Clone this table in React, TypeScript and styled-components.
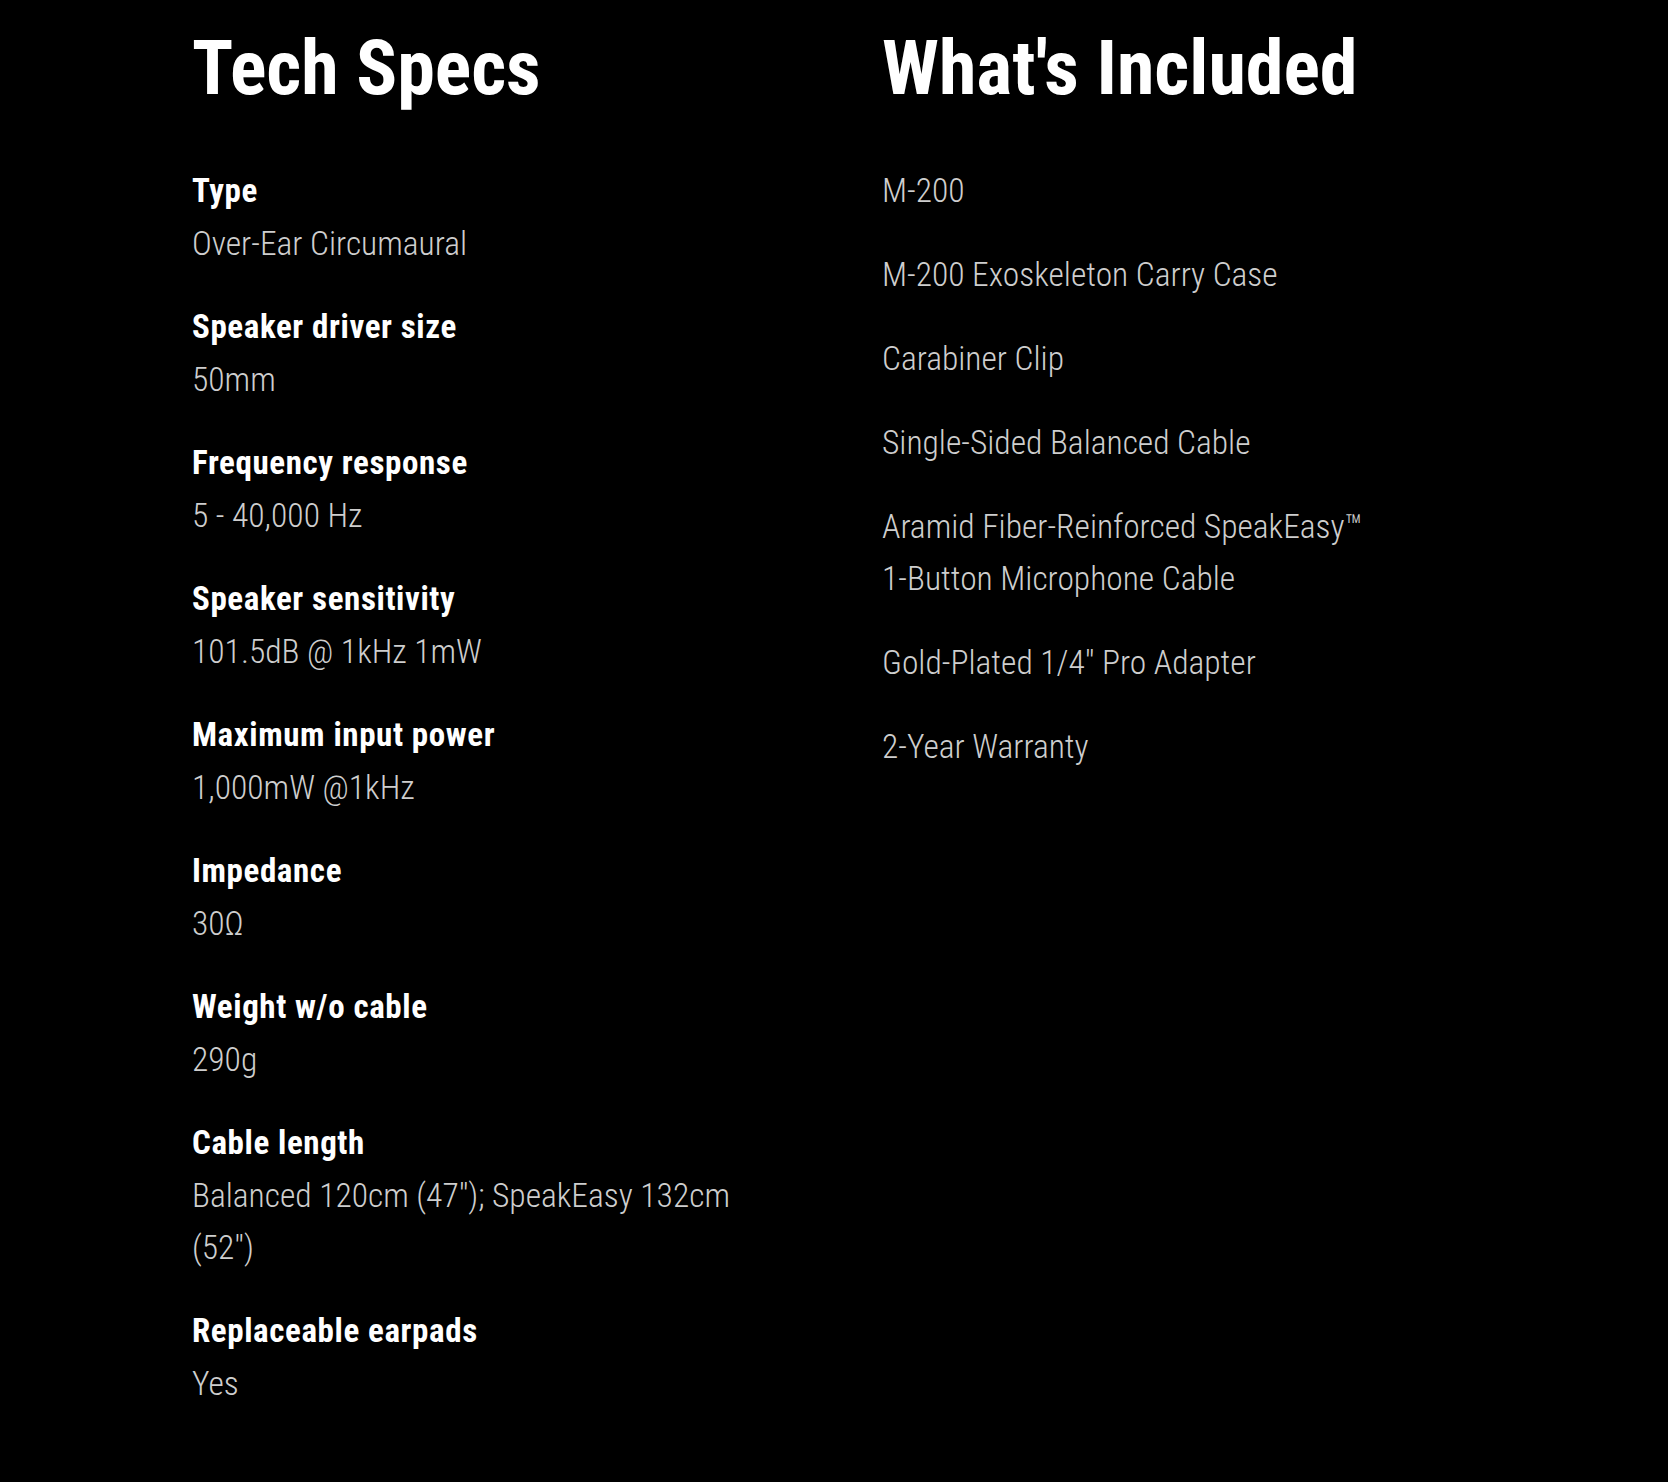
import { createGlobalStyle, styled } from 'styled-components'

const GlobalStyle = createGlobalStyle`
  html, body {
    margin: 0;
    padding: 0;
    background: #000;
  }
  body {
    font-family: 'Roboto Condensed', 'Roboto', 'Liberation Sans', sans-serif;
    font-stretch: condensed;
    color: #fff;
  }
`

const Page = styled.main`
  display: grid;
  grid-template-columns: 690px 560px;
  padding: 30px 0 80px 192px;
`

const Column = styled.section`
  display: flex;
  flex-direction: column;
`

const Title = styled.h2`
  margin: 0;
  font-size: 76px;
  line-height: 76px;
  font-weight: 700;
  color: #fff;
`

const SpecList = styled.dl`
  display: flex;
  flex-direction: column;
  gap: 30px;
  margin: 58px 0 0;
  width: 570px;
`

const SpecItem = styled.div`
  display: flex;
  flex-direction: column;
`

const Label = styled.dt`
  font-size: 33px;
  line-height: 54px;
  font-weight: 700;
  letter-spacing: 0.6px;
  color: #fff;
`

const Value = styled.dd`
  margin: 0;
  font-size: 33.5px;
  line-height: 52px;
  font-weight: 300;
  color: #cecece;
`

const IncludedList = styled.ul`
  list-style: none;
  display: flex;
  flex-direction: column;
  gap: 32px;
  margin: 59px 0 0;
  padding: 0;
  width: 498px;
`

const IncludedItem = styled.li`
  font-size: 33.5px;
  line-height: 52px;
  font-weight: 300;
  color: #cecece;
`

const specs = [
  { label: 'Type', value: 'Over-Ear Circumaural' },
  { label: 'Speaker driver size', value: '50mm' },
  { label: 'Frequency response', value: '5 - 40,000 Hz' },
  { label: 'Speaker sensitivity', value: '101.5dB @ 1kHz 1mW' },
  { label: 'Maximum input power', value: '1,000mW @1kHz' },
  { label: 'Impedance', value: '30Ω' },
  { label: 'Weight w/o cable', value: '290g' },
  { label: 'Cable length', value: 'Balanced 120cm (47"); SpeakEasy 132cm (52")' },
  { label: 'Replaceable earpads', value: 'Yes' },
]

const included = [
  'M-200',
  'M-200 Exoskeleton Carry Case',
  'Carabiner Clip',
  'Single-Sided Balanced Cable',
  'Aramid Fiber-Reinforced SpeakEasy™ 1-Button Microphone Cable',
  'Gold-Plated 1/4" Pro Adapter',
  '2-Year Warranty',
]

function App() {
  return (
    <>
      <GlobalStyle />
      <Page>
        <Column>
          <Title>Tech Specs</Title>
          <SpecList>
            {specs.map((spec) => (
              <SpecItem key={spec.label}>
                <Label>{spec.label}</Label>
                <Value>{spec.value}</Value>
              </SpecItem>
            ))}
          </SpecList>
        </Column>
        <Column>
          <Title>What's Included</Title>
          <IncludedList>
            {included.map((item) => (
              <IncludedItem key={item}>{item}</IncludedItem>
            ))}
          </IncludedList>
        </Column>
      </Page>
    </>
  )
}

export default App
